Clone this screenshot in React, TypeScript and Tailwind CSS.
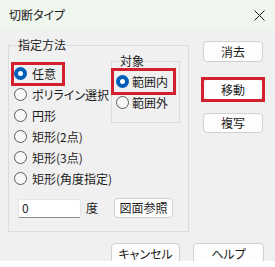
import React from 'react'

const font = "font-['Noto_Sans_CJK_JP','Noto_Sans',sans-serif] [font-feature-settings:'palt']"

const Radio = ({ checked }: { checked?: boolean }) =>
  checked ? (
    <span className="w-[13px] h-[13px] rounded-full bg-[#005fb8] flex items-center justify-center shrink-0">
      <span className="w-[5px] h-[5px] rounded-full bg-white" />
    </span>
  ) : (
    <span className="w-[13px] h-[13px] rounded-full border border-[#5c5c5c] bg-[#f7f7f7] shrink-0" />
  )

const Btn = ({ label, className = '' }: { label: string; className?: string }) => (
  <div
    className={`flex items-center justify-center bg-[#fdfdfd] border border-[#d0d0d0] rounded-[4px] text-[12px] text-[#1b1b1b] ${className}`}
  >
    {label}
  </div>
)

const methods = ['ポリライン選択', '円形', '矩形(2点)', '矩形(3点)', '矩形(角度指定)']

export default function App() {
  return (
    <div className={`w-[275px] h-[267px] bg-white text-[#1b1b1b] ${font}`}>
      {/* Title bar */}
      <div className="h-[30px] bg-[#eef6ee] flex items-center justify-between pl-[9px] pr-[10px]">
        <span className="text-[12px]">切断タイプ</span>
        <svg width="11" height="11" viewBox="0 0 11 11">
          <path d="M0.5 0.5 L10.5 10.5 M10.5 0.5 L0.5 10.5" stroke="#1b1b1b" strokeWidth="1" />
        </svg>
      </div>

      {/* Body */}
      <div className="h-[231px] bg-[#f0f0f0] overflow-hidden flex flex-col">
        <div className="flex">
          <fieldset className="ml-[8px] mt-[7px] w-[181px] h-[195px] border border-[#dcdcdc] px-0 pb-0">
            <legend className="ml-[8px] px-[1px] text-[12px] leading-[16px]">指定方法</legend>
            <div className="flex">
              <div className="w-[102px] pl-[5px] pt-[10px] flex flex-col text-[12px]">
                <div className="h-[21px] flex items-center">
                  <span className="flex items-center gap-[5px] h-[18px] pr-[6px] outline-[3px] outline-[#d2202e]">
                    <Radio checked />
                    <span>任意</span>
                  </span>
                </div>
                {methods.map((m) => (
                  <div key={m} className="h-[21px] flex items-center gap-[5px]">
                    <Radio />
                    <span className="whitespace-nowrap">{m}</span>
                  </div>
                ))}
              </div>
              <fieldset className="w-[69px] h-[70px] border border-[#dcdcdc] px-0 pb-0">
                <legend className="ml-[7px] px-[1px] text-[12px] leading-[16px]">対象</legend>
                <div className="pl-[4px] pt-[2px] flex flex-col text-[12px]">
                  <div className="h-[21px] flex items-center">
                    <span className="flex items-center gap-[3px] h-[19px] pl-[1px] pr-[4px] -ml-[1px] outline-[3px] outline-offset-[1px] outline-[#d2202e]">
                      <Radio checked />
                      <span>範囲内</span>
                    </span>
                  </div>
                  <div className="h-[21px] flex items-center gap-[3px]">
                    <Radio />
                    <span>範囲外</span>
                  </div>
                </div>
              </fieldset>
            </div>
            <div className="flex items-center mt-[9px] pl-[9px] text-[12px]">
              <div className="w-[63px] h-[19px] bg-white border border-[#e6e6e6] border-b-[#8a8a8a] rounded-[2px] flex items-center pl-[3px]">
                0
              </div>
              <span className="ml-[5px]">度</span>
              <Btn label="図面参照" className="ml-[16px] w-[59px] h-[20px]" />
            </div>
          </fieldset>

          <div className="ml-[14px] pt-[11px] flex flex-col">
            <Btn label="消去" className="w-[60px] h-[21px] border-[#33679c]" />
            <div className="mt-[17px] outline-[3px] outline-offset-[-1px] outline-[#d2202e]">
              <Btn label="移動" className="w-[60px] h-[21px]" />
            </div>
            <Btn label="複写" className="mt-[13px] w-[60px] h-[20px]" />
          </div>
        </div>

        <div className="flex justify-end gap-[13px] pr-[11px] mt-[11px]">
          <Btn label="キャンセル" className="w-[69px] h-[21px] shrink-0" />
          <Btn label="ヘルプ" className="w-[71px] h-[21px] shrink-0" />
        </div>
      </div>
    </div>
  )
}
